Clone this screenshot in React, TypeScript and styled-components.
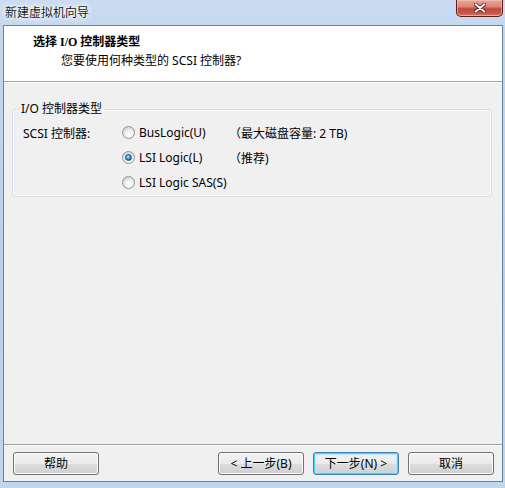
import React from "react";
import styled, { createGlobalStyle, css } from "styled-components";

const Global = createGlobalStyle`
  html, body { margin: 0; padding: 0; overflow: hidden; }
  body { background: #bcd3eb; }
`;

const UI = `"Noto Sans", "Noto Sans CJK SC", sans-serif`;

const Frame = styled.div`
  width: 505px;
  height: 488px;
  box-sizing: border-box;
  display: flex;
  flex-direction: column;
  padding: 0 2px 6px 3px;
  background: linear-gradient(180deg, #cadcf1 0%, #c1d7ee 8%, #b7cfe9 60%, #c0d6ed 100%);
  font-family: ${UI};
  font-size: 12px;
  color: #000;
`;

const TitleBar = styled.div`
  height: 25px;
  flex: none;
  display: flex;
  align-items: flex-start;
  justify-content: space-between;
`;

const Caption = styled.span`
  margin: 4px 0 0 2px;
  line-height: 17px;
  font-size: 12px;
  color: #1a1a1a;
  text-shadow: 0 0 6px #fff, 0 0 3px #fff, 0 0 8px rgba(255,255,255,0.9);
`;

const CloseButton = styled.div`
  width: 47px;
  height: 17px;
  box-sizing: border-box;
  border: 1px solid #5b1f1b;
  border-top: none;
  border-radius: 0 0 5px 5px;
  background: linear-gradient(180deg, #e7a697 0%, #d98a7c 40%, #c4463a 55%, #c95a4c 85%, #e0806e 100%);
  box-shadow: inset 0 0 0 1px rgba(255, 200, 190, 0.55);
  display: flex;
  align-items: center;
  justify-content: center;
`;

const Client = styled.div`
  flex: 1;
  display: flex;
  flex-direction: column;
  border: 1px solid #6e8197;
  background: #f0f0f0;
`;

const Header = styled.div`
  height: 56px;
  flex: none;
  background: #fff;
  padding: 7px 0 0 29px;
  box-sizing: border-box;
  border-bottom: 1px solid #a0a0a0;
`;

const HeaderTitle = styled.div`
  font-family: "Liberation Serif", "Noto Sans CJK SC", serif;
  font-weight: bold;
  font-size: 12px;
  line-height: 18px;
`;

const HeaderSub = styled.div`
  margin: 1px 0 0 28px;
  line-height: 18px;
`;

const Etch = styled.div`
  height: 1px;
  flex: none;
  background: #fff;
`;

const Body = styled.div`
  flex: 1;
  padding: 18px 10px 0 8px;
`;

const Group = styled.fieldset`
  margin: 0;
  padding: 3px 0 1px 0;
  border: 1px solid #d5dfe5;
  border-radius: 3px;
  box-shadow: inset 0 0 0 1px #fafafa;
`;

const Legend = styled.legend`
  margin-left: 6px;
  padding: 0 2px;
  line-height: 16px;
`;

const Grid = styled.div`
  display: grid;
  grid-template-columns: 99px 107px 1fr;
  grid-auto-rows: 25px;
  align-items: center;
  padding-left: 10px;
`;

const Cell = styled.span`
  white-space: nowrap;
`;

const Choice = styled.label`
  display: flex;
  align-items: center;
  gap: 4px;
  white-space: nowrap;
`;

const Radio = styled.span<{ $checked?: boolean }>`
  width: 13px;
  height: 13px;
  box-sizing: border-box;
  border-radius: 50%;
  border: 1px solid #929292;
  background: radial-gradient(circle at 60% 70%, #ffffff 0%, #f4f4f4 35%, #d6d6d6 75%, #c4c4c4 100%);
  display: inline-flex;
  align-items: center;
  justify-content: center;
  flex: none;
  ${(p) =>
    p.$checked &&
    css`
      &::after {
        content: "";
        width: 7px;
        height: 7px;
        border-radius: 50%;
        box-sizing: border-box;
        border: 1px solid #1a4a78;
        background: radial-gradient(circle at 40% 35%, #b7ecff 0%, #3fa9e6 40%, #18609f 80%);
      }
    `}
`;

const Footer = styled.div`
  height: 37px;
  flex: none;
  box-sizing: border-box;
  padding: 7px 8px 7px 9px;
  display: flex;
  align-items: center;
  gap: 9px;
  border-top: 1px solid #a0a0a0;
  box-shadow: inset 0 1px 0 #fff;
`;

const Spacer = styled.div`
  flex: 1;
`;

const Button = styled.button<{ $default?: boolean }>`
  width: 86px;
  height: 23px;
  box-sizing: border-box;
  padding: 0;
  font-family: ${UI};
  font-size: 12px;
  color: #000;
  border: 1px solid #707070;
  border-radius: 3px;
  background: linear-gradient(180deg, #f2f2f2 0%, #ebebeb 50%, #dddddd 51%, #cfcfcf 100%);
  box-shadow: inset 0 0 0 1px #fcfcfc;
  ${(p) =>
    p.$default &&
    css`
      border-color: #3c7fb1;
      box-shadow: inset 0 0 0 1px #48d6fb, inset 0 0 0 2px rgba(160, 230, 250, 0.6);
    `}
`;

function CloseGlyph() {
  return (
    <svg width="12" height="10" viewBox="0 0 12 10">
      <path
        d="M1 1 L11 9 M11 1 L1 9"
        stroke="#4a1410"
        strokeWidth="3.6"
        strokeLinecap="round"
        fill="none"
      />
      <path
        d="M1.5 1.3 L10.5 8.7 M10.5 1.3 L1.5 8.7"
        stroke="#ffffff"
        strokeWidth="2"
        strokeLinecap="round"
        fill="none"
      />
    </svg>
  );
}

export default function App() {
  return (
    <>
      <Global />
      <Frame>
        <TitleBar>
          <Caption>新建虚拟机向导</Caption>
          <CloseButton>
            <CloseGlyph />
          </CloseButton>
        </TitleBar>
        <Client>
          <Header>
            <HeaderTitle>选择 I/O 控制器类型</HeaderTitle>
            <HeaderSub>您要使用何种类型的 SCSI 控制器?</HeaderSub>
          </Header>
          <Etch />
          <Body>
            <Group>
              <Legend>I/O 控制器类型</Legend>
              <Grid>
                <Cell>SCSI 控制器:</Cell>
                <Choice>
                  <Radio />
                  BusLogic(U)
                </Choice>
                <Cell>（最大磁盘容量: 2 TB)</Cell>
                <Cell />
                <Choice>
                  <Radio $checked />
                  LSI Logic(L)
                </Choice>
                <Cell>（推荐)</Cell>
                <Cell />
                <Choice>
                  <Radio />
                  LSI Logic SAS(S)
                </Choice>
                <Cell />
              </Grid>
            </Group>
          </Body>
          <Footer>
            <Button>帮助</Button>
            <Spacer />
            <Button>&lt; 上一步(B)</Button>
            <Button $default>下一步(N) &gt;</Button>
            <Button>取消</Button>
          </Footer>
        </Client>
      </Frame>
    </>
  );
}
